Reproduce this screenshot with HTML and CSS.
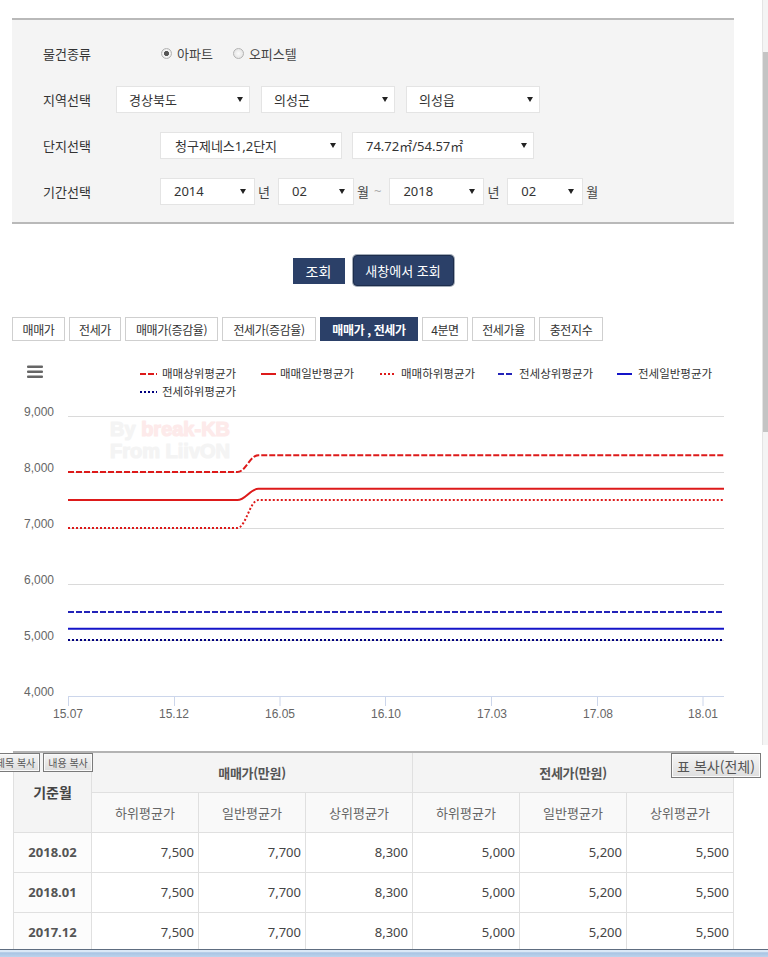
FILE: index.html
```html
<!DOCTYPE html>
<html lang="ko">
<head>
<meta charset="utf-8">
<title>시세 조회</title>
<link rel="stylesheet" href="styles.css">
</head>
<body>
<div class="page">
  <section class="filter">
    <div class="frow">
      <div class="flabel">물건종류</div>
      <span class="radio radio-on"></span><span class="rtext">아파트</span>
      <span class="radio"></span><span class="rtext">오피스텔</span>
    </div>
    <div class="frow">
      <div class="flabel flabel-short">지역선택</div>
      <div class="sel sel-region">경상북도<i class="caret"></i></div>
      <div class="sel sel-region">의성군<i class="caret"></i></div>
      <div class="sel sel-region">의성읍<i class="caret"></i></div>
    </div>
    <div class="frow">
      <div class="flabel">단지선택</div>
      <div class="sel sel-complex">청구제네스1,2단지<i class="caret"></i></div>
      <div class="sel sel-area">74.72㎡/54.57㎡<i class="caret"></i></div>
    </div>
    <div class="frow">
      <div class="flabel">기간선택</div>
      <div class="sel sel-year">2014<i class="caret"></i></div><span class="unit">년</span>
      <div class="sel sel-month">02<i class="caret"></i></div><span class="unit">월</span>
      <span class="tilde">~</span>
      <div class="sel sel-year">2018<i class="caret"></i></div><span class="unit">년</span>
      <div class="sel sel-month">02<i class="caret"></i></div><span class="unit">월</span>
    </div>
  </section>

  <div class="actions">
    <button class="btn btn-search">조회</button>
    <button class="btn btn-new">새창에서 조회</button>
  </div>

  <nav class="tabs">
    <span class="tab tw53">매매가</span>
    <span class="tab tw52">전세가</span>
    <span class="tab tw93">매매가(증감율)</span>
    <span class="tab tw94">전세가(증감율)</span>
    <span class="tab tw98 tab-active">매매가 , 전세가</span>
    <span class="tab tw46">4분면</span>
    <span class="tab tw63">전세가율</span>
    <span class="tab tw64">충전지수</span>
  </nav>

  <div class="chart">
    <svg class="chart-svg" width="722" height="410" viewBox="12 341 722 410" xmlns="http://www.w3.org/2000/svg">
      <g fill="#666">
        <rect x="27" y="365.5" width="16" height="2.6" rx="1"/>
        <rect x="27" y="370.5" width="16" height="2.6" rx="1"/>
        <rect x="27" y="375.5" width="16" height="2.6" rx="1"/>
      </g>

      <g font-family="Noto Sans CJK KR, sans-serif" font-size="11.5" fill="#333">
        <path d="M140 374H157" stroke="#dd1a1a" stroke-width="2" stroke-dasharray="6 2"/>
        <text x="162" y="378">매매상위평균가</text>
        <path d="M261 374H276" stroke="#dd1a1a" stroke-width="2"/>
        <text x="280" y="378">매매일반평균가</text>
        <path d="M380 374H395" stroke="#dd1a1a" stroke-width="2" stroke-dasharray="2 2"/>
        <text x="401" y="378">매매하위평균가</text>
        <path d="M498 374H514" stroke="#2323b8" stroke-width="2" stroke-dasharray="6 2"/>
        <text x="519" y="378">전세상위평균가</text>
        <path d="M617 374H632" stroke="#1414c8" stroke-width="2"/>
        <text x="638" y="378">전세일반평균가</text>
        <path d="M140 392H157" stroke="#000080" stroke-width="2" stroke-dasharray="2 2"/>
        <text x="162" y="396">전세하위평균가</text>
      </g>

      <g font-family="Liberation Sans, Arial, sans-serif" font-weight="bold" font-size="20" stroke-width="1.2" stroke-linejoin="round">
        <text x="110" y="436" fill="#f4f4f4" stroke="#f4f4f4">By <tspan fill="#fdeaea" stroke="#fdeaea">break-KB</tspan></text>
        <text x="110" y="458" fill="#f4f4f4" stroke="#f4f4f4">From LiivON</text>
      </g>

      <path d="M68 416.5H724M68 472.5H724M68 528.5H724M68 584.5H724M68 640.5H724" stroke="#dadada" stroke-width="1" fill="none"/>
      <path d="M68 696.5H724" stroke="#ccd6eb" stroke-width="1"/>
      <path d="M68.5 697V706M174.5 697V706M280 697V706M385.5 697V706M491.5 697V706M597.5 697V706M703 697V706" stroke="#ccd6eb" stroke-width="1"/>

      <g font-family="Liberation Sans, Arial, sans-serif" font-size="12" fill="#666" text-anchor="end">
        <text x="54" y="416">9,000</text>
        <text x="54" y="472">8,000</text>
        <text x="54" y="528">7,000</text>
        <text x="54" y="584">6,000</text>
        <text x="54" y="640">5,000</text>
        <text x="54" y="696">4,000</text>
      </g>
      <g font-family="Liberation Sans, Arial, sans-serif" font-size="12" fill="#666" text-anchor="middle">
        <text x="68" y="718">15.07</text>
        <text x="174" y="718">15.12</text>
        <text x="280" y="718">16.05</text>
        <text x="386" y="718">16.10</text>
        <text x="492" y="718">17.03</text>
        <text x="598" y="718">17.08</text>
        <text x="703" y="718">18.01</text>
      </g>

      <g fill="none" stroke-width="2">
        <path d="M68 612H724" stroke="#2323b8" stroke-dasharray="6 2"/>
        <path d="M68 628.8H724" stroke="#1414c8"/>
        <path d="M68 640H724" stroke="#000080" stroke-dasharray="2 2"/>
        <path d="M68 472L237.3 472C245.7 472 250 455.2 258.4 455.2L724 455.2" stroke="#dd1a1a" stroke-dasharray="6 2"/>
        <path d="M68 500L237.3 500C245.7 500 250 488.8 258.4 488.8L724 488.8" stroke="#dd1a1a"/>
        <path d="M68 528L237.3 528C245.7 528 250 500 258.4 500L724 500" stroke="#dd1a1a" stroke-dasharray="2 2"/>
      </g>
    </svg>
  </div>

  <div class="table-wrap">
    <button class="copy copy-title">제목 복사</button>
    <button class="copy copy-body">내용 복사</button>
    <button class="copy-all">표 복사(전체)</button>
    <table class="data">
      <colgroup>
        <col class="c-month">
        <col class="c-val"><col class="c-val"><col class="c-val">
        <col class="c-val"><col class="c-val"><col class="c-val">
      </colgroup>
      <thead>
        <tr class="hr1">
          <th rowspan="2" class="th-month">기준월</th>
          <th colspan="3" class="th-group">매매가(만원)</th>
          <th colspan="3" class="th-group">전세가(만원)</th>
        </tr>
        <tr class="hr2">
          <th class="th-sub">하위평균가</th><th class="th-sub">일반평균가</th><th class="th-sub">상위평균가</th>
          <th class="th-sub">하위평균가</th><th class="th-sub">일반평균가</th><th class="th-sub">상위평균가</th>
        </tr>
      </thead>
      <tbody>
        <tr>
          <td class="td-month">2018.02</td>
          <td class="num">7,500</td><td class="num">7,700</td><td class="num">8,300</td>
          <td class="num">5,000</td><td class="num">5,200</td><td class="num">5,500</td>
        </tr>
        <tr>
          <td class="td-month">2018.01</td>
          <td class="num">7,500</td><td class="num">7,700</td><td class="num">8,300</td>
          <td class="num">5,000</td><td class="num">5,200</td><td class="num">5,500</td>
        </tr>
        <tr>
          <td class="td-month">2017.12</td>
          <td class="num">7,500</td><td class="num">7,700</td><td class="num">8,300</td>
          <td class="num">5,000</td><td class="num">5,200</td><td class="num">5,500</td>
        </tr>
      </tbody>
    </table>
  </div>
</div>

<div class="scrollbar"><div class="scroll-thumb"></div></div>
<div class="taskbar"></div>
</body>
</html>
```

FILE: styles.css
```css
* { box-sizing: border-box; }

html, body {
  margin: 0;
  padding: 0;
  background: #fff;
  overflow: hidden;
}

body {
  width: 768px;
  height: 957px;
  font-family: "Noto Sans", "Noto Sans CJK KR", sans-serif;
  color: #333;
}

.page {
  width: 768px;
  padding-left: 12px;
}

/* ---------- filter panel ---------- */
.filter {
  width: 722px;
  margin-top: 18px;
  background: #f4f4f4;
  border-top: 2px solid #b9b9b9;
  border-bottom: 2px solid #b9b9b9;
  padding: 10px 0 8px 31px;
}

.frow {
  display: flex;
  align-items: center;
  height: 46px;
}

.flabel {
  flex: none;
  width: 117px;
  font-size: 13px;
  color: #333;
}

.flabel-short { width: 73px; }

.radio {
  flex: none;
  width: 11px;
  height: 11px;
  margin-left: 1px;
  border-radius: 50%;
  border: 1px solid #b3b3b3;
  background: radial-gradient(circle, #fbfbfb 0, #dedede 100%);
}

.radio-on {
  background: radial-gradient(circle, #555 0 2.2px, #f6f6f6 2.9px, #d8d8d8 100%);
}

.rtext {
  font-size: 13px;
  color: #444;
  margin: 0 19px 0 5px;
}

.sel {
  flex: none;
  height: 27px;
  display: flex;
  align-items: center;
  justify-content: space-between;
  padding: 0 6px 0 12px;
  background: #fff;
  border: 1px solid #e4e4e4;
  font-size: 13px;
  color: #333;
}

.caret {
  width: 0;
  height: 0;
  border-left: 3px solid transparent;
  border-right: 3px solid transparent;
  border-top: 5px solid #222;
}

.sel-region { width: 134px; }
.sel-region + .sel-region { margin-left: 11px; }
.sel-complex { width: 182px; padding-left: 14px; padding-right: 5px; }
.sel-area { width: 182px; margin-left: 10px; padding-left: 13px; }
.sel-year { width: 95px; padding-left: 13px; padding-right: 8px; }
.sel-month { width: 76px; padding-left: 13px; padding-right: 8px; }

.unit {
  font-size: 13px;
  color: #444;
  margin: 0 8px 0 3px;
}

.tilde {
  font-size: 13px;
  color: #aaa;
  margin: 0 8px 0 -3px;
}

/* ---------- buttons ---------- */
.actions {
  width: 722px;
  height: 31px;
  margin-top: 31px;
  display: flex;
  justify-content: center;
  align-items: center;
  gap: 8px;
}

.btn {
  font-family: "Noto Sans CJK KR", sans-serif;
  color: #fff;
  background: #2b4068;
  border: none;
  cursor: pointer;
}

.btn-search {
  width: 52px;
  height: 26px;
  font-size: 14px;
  padding: 0;
}

.btn-new {
  width: 101px;
  height: 31px;
  font-size: 13px;
  padding: 0;
  border-radius: 4px;
  border: 1px solid #1d2d4c;
  box-shadow: 0 0 0 1px #a3acb8;
}

/* ---------- tabs ---------- */
.tabs {
  display: flex;
  gap: 4px;
  margin-top: 31px;
}

.tab {
  height: 24px;
  display: flex;
  align-items: center;
  justify-content: center;
  background: #fff;
  border: 1px solid #cfcfcf;
  font-family: "Noto Sans CJK KR", sans-serif;
  font-size: 12px;
  letter-spacing: -0.4px;
  color: #333;
  white-space: nowrap;
}

.tab-active {
  background: #2b4068;
  border-color: #2b4068;
  color: #fff;
  font-weight: bold;
}

.tw53 { width: 53px; }
.tw52 { width: 52px; }
.tw93 { width: 93px; }
.tw94 { width: 94px; }
.tw98 { width: 98px; }
.tw46 { width: 46px; }
.tw63 { width: 63px; }
.tw64 { width: 64px; }

/* ---------- chart ---------- */
.chart {
  height: 410px;
}

.chart-svg {
  display: block;
}

/* ---------- table ---------- */
.table-wrap {
  position: relative;
}

.data {
  margin-left: 1px;
  width: 720px;
  table-layout: fixed;
  border-collapse: collapse;
  border-top: 2px solid #b3b3b3;
}

.c-month { width: 78px; }
.c-val { width: 107px; }

.data th,
.data td {
  height: 40px;
  padding: 0;
  border: 1px solid #e0e0e0;
}

.hr1 th { background: #f4f4f4; }
.hr2 th { background: #f9f9f9; }

.th-month {
  font-family: "Noto Sans CJK KR", sans-serif;
  font-size: 14px;
  font-weight: bold;
  color: #444;
  background: #f4f4f4;
}

.th-group {
  font-family: "Noto Sans CJK KR", sans-serif;
  font-size: 13px;
  font-weight: bold;
  color: #555;
  letter-spacing: -0.3px;
}

.th-sub {
  font-family: "Noto Sans CJK KR", sans-serif;
  font-size: 13px;
  font-weight: normal;
  color: #666;
}

.td-month {
  text-align: center;
  font-size: 13px;
  font-weight: bold;
  color: #555;
  background: #fcfcfc;
}

.num {
  text-align: right;
  padding-right: 4px !important;
  font-size: 13px;
  color: #444;
}

.copy {
  position: absolute;
  top: 2px;
  height: 19px;
  padding: 0;
  font-family: "Noto Sans CJK KR", sans-serif;
  font-size: 10px;
  color: #555;
  background: linear-gradient(#f5f5f5, #dcdcdc);
  border: 1px solid #7a7a7a;
  box-shadow: inset 0 0 0 1px #fafafa;
}

.copy-title { left: -21px; width: 49px; }
.copy-body { left: 31px; width: 50px; }

.copy-all {
  position: absolute;
  top: 2px;
  left: 659px;
  width: 90px;
  height: 25px;
  padding: 0;
  font-family: "Noto Sans CJK KR", sans-serif;
  font-size: 14px;
  color: #555;
  background: linear-gradient(#f6f6f6, #dedede);
  border: 1px solid #7a7a7a;
  box-shadow: inset 0 0 0 1px #fbfbfb;
}

/* ---------- window chrome ---------- */
.scrollbar {
  position: fixed;
  top: 0;
  right: 0;
  width: 6px;
  height: 745px;
  background: #f4f4f4;
  border-left: 1px solid #e4e4e4;
}

.scroll-thumb {
  margin-top: 52px;
  height: 380px;
  background: #c4c4c4;
}

.taskbar {
  position: fixed;
  left: 0;
  bottom: 0;
  width: 768px;
  height: 8px;
  border-top: 1px solid #5e6d80;
  background: linear-gradient(#dbe8f6 0, #dbe8f6 25%, #a9c4e3 40%, #bcd3ec 100%);
}
```
